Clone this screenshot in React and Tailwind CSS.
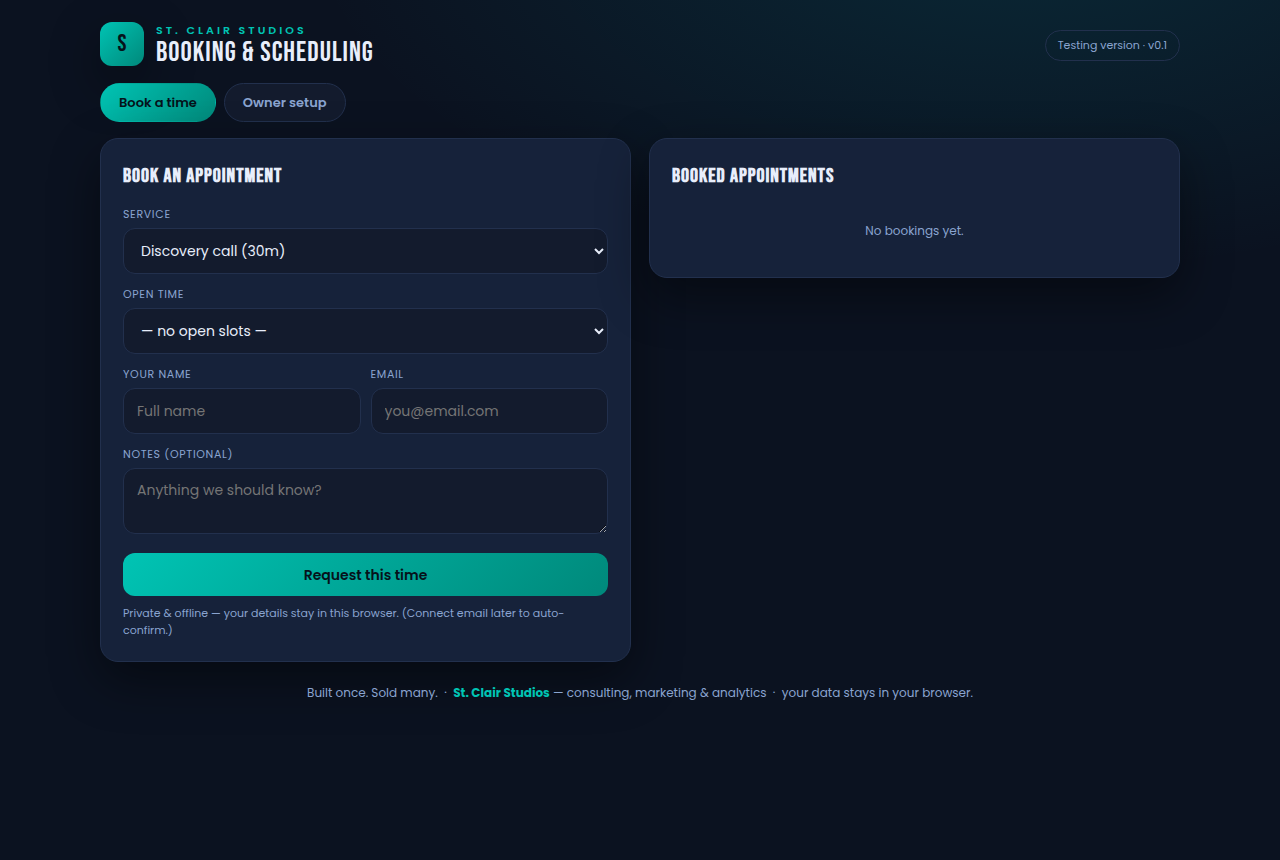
import { useState } from "react";

const field =
  "w-full rounded-xl border border-[#22304d] bg-[#131b2d] px-[13px] text-sm text-[#e8eefb] placeholder:text-[#757575] outline-none focus:border-[#00c4b4]";
const label =
  "mb-1.5 block text-[11px] leading-4 tracking-[0.06em] text-[#8aa4d0] uppercase";
const card =
  "rounded-[18px] border border-[#22304d] bg-[#16223a] p-[22px] shadow-[0_18px_50px_rgba(0,0,0,0.45)]";
const heading =
  "mb-[14px] font-['Bebas_Neue','Oswald',sans-serif] text-[20px] leading-[31px] font-bold tracking-[1px] text-[#e8eefb] uppercase";

function Tab({ active, onClick, children }) {
  return (
    <button
      type="button"
      onClick={onClick}
      className={
        active
          ? "h-[39px] rounded-full border border-transparent bg-linear-135 from-[#00c4b4] to-[#00897b] px-[18px] text-[13px] font-semibold text-[#06121a]"
          : "h-[39px] rounded-full border border-[#22304d] bg-[#131b2d] px-[18px] text-[13px] font-semibold text-[#8aa4d0]"
      }
    >
      {children}
    </button>
  );
}

export default function App() {
  const [tab, setTab] = useState("book");
  return (
    <div className="min-h-screen bg-[#0b1220] bg-[radial-gradient(1200px_600px_at_80%_-10%,rgba(0,180,190,0.14),transparent_60%)] font-['Poppins','Inter',sans-serif] text-[#e8eefb]">
      <div className="mx-auto max-w-[1120px] px-5 pt-[22px] pb-10">
        <header className="flex items-center justify-between">
          <div className="flex items-start gap-3">
            <div className="flex size-11 items-center justify-center rounded-xl bg-linear-135 from-[#00c4b4] to-[#00897b] font-['Bebas_Neue','Oswald',sans-serif] text-[24px] text-[#06121a] shadow-[0_18px_50px_rgba(0,0,0,0.45)]">
              S
            </div>
            <div>
              <div className="text-[11px] leading-4 font-semibold tracking-[3px] text-[#00c4b4] uppercase">
                St. Clair Studios
              </div>
              <h1 className="font-['Bebas_Neue','Oswald',sans-serif] text-[28px] leading-[30px] tracking-[1px] uppercase">
                Booking &amp; Scheduling
              </h1>
            </div>
          </div>
          <span className="rounded-full border border-[#22304d] px-3 py-1.5 text-[11px] leading-[17px] text-[#8aa4d0]">
            Testing version · v0.1
          </span>
        </header>

        <nav className="mt-[15px] mb-4 flex gap-2">
          <Tab active={tab === "book"} onClick={() => setTab("book")}>
            Book a time
          </Tab>
          <Tab active={tab === "owner"} onClick={() => setTab("owner")}>
            Owner setup
          </Tab>
        </nav>

        <main className="grid items-start gap-[18px] md:grid-cols-2">
          <section className={card}>
            <h2 className={heading}>Book an appointment</h2>
            <form onSubmit={(e) => e.preventDefault()}>
              <div className="flex flex-col gap-3">
                <div>
                  <label htmlFor="service" className={label}>Service</label>
                  <select id="service" className={`${field} h-[46px]`}>
                    <option>Discovery call (30m)</option>
                  </select>
                </div>
                <div>
                  <label htmlFor="slot" className={label}>Open time</label>
                  <select id="slot" className={`${field} h-[46px]`}>
                    <option>— no open slots —</option>
                  </select>
                </div>
                <div className="grid grid-cols-2 gap-2.5">
                  <div>
                    <label htmlFor="name" className={label}>Your name</label>
                    <input id="name" placeholder="Full name" className={`${field} h-[46px]`} />
                  </div>
                  <div>
                    <label htmlFor="email" className={label}>Email</label>
                    <input id="email" type="email" placeholder="you@email.com" className={`${field} h-[46px]`} />
                  </div>
                </div>
                <div>
                  <label htmlFor="notes" className={label}>Notes (optional)</label>
                  <textarea
                    id="notes"
                    placeholder="Anything we should know?"
                    className={`${field} block h-[66px] resize-y py-[11px]`}
                  />
                </div>
              </div>
              <button
                type="submit"
                className="mt-[19px] h-[43px] w-full rounded-xl bg-linear-135 from-[#00c4b4] to-[#00897b] text-sm font-semibold text-[#06121a]"
              >
                Request this time
              </button>
            </form>
            <p className="mt-[9px] text-[11px] leading-[17px] text-[#8aa4d0]">
              Private &amp; offline — your details stay in this browser. (Connect email later to auto-confirm.)
            </p>
          </section>

          <section className={card}>
            <h2 className={heading}>Booked appointments</h2>
            <p className="py-[15px] text-center text-[12px] leading-[19px] text-[#8aa4d0]">No bookings yet.</p>
          </section>
        </main>

        <footer className="mt-[22px] text-center text-[12px] leading-[18px] text-[#8aa4d0]">
          Built once. Sold many. &nbsp;·&nbsp; <b className="font-bold text-[#00c4b4]">St. Clair Studios</b> — consulting,
          marketing &amp; analytics &nbsp;·&nbsp; your data stays in your browser.
        </footer>
      </div>
    </div>
  );
}
